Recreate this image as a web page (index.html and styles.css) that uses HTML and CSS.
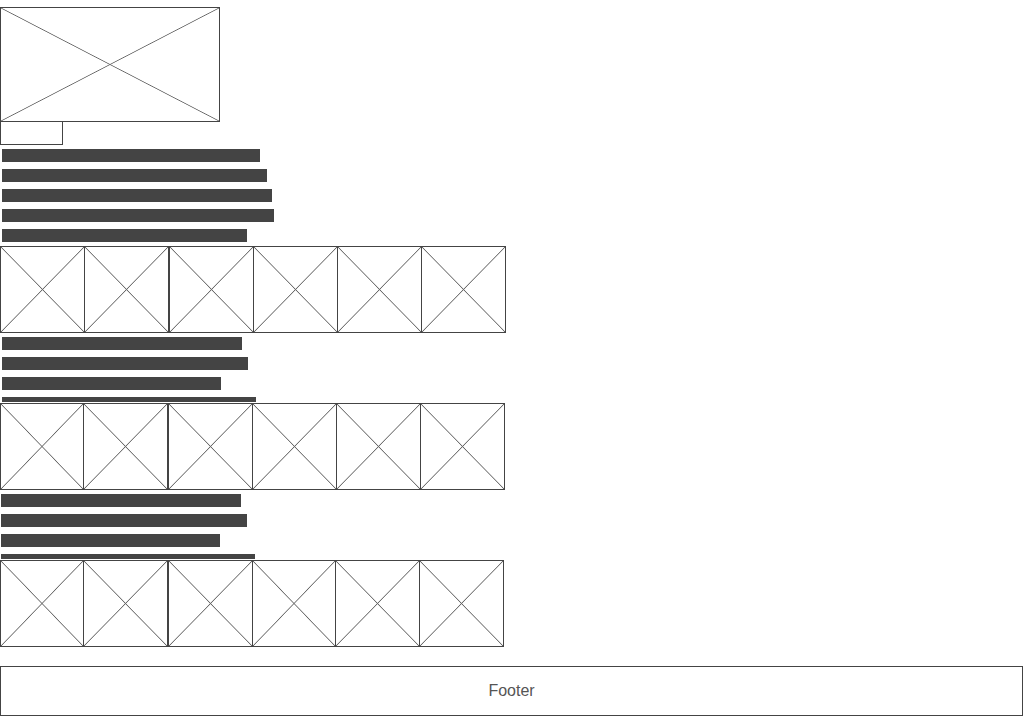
FILE: index.html
```html
<!DOCTYPE html>
<html lang="en">
<head>
    <meta charset="UTF-8">
    <meta name="viewport" content="width=device-width, initial-scale=1.0">
    <title>Wireframe</title>
    <link rel="stylesheet" href="styles.css">
</head>
<body>
    <div class="page">
        <!-- Hero image and caption -->
        <div class="placeholder hero"></div>
        <div class="caption-box"></div>

        <div class="lines intro">
            <div class="line" style="width: 258px"></div>
            <div class="line" style="width: 265px"></div>
            <div class="line" style="width: 270px"></div>
            <div class="line" style="width: 272px"></div>
            <div class="line" style="width: 245px"></div>
        </div>

        <!-- Gallery 1 -->
        <div class="gallery">
            <div class="placeholder cell"></div>
            <div class="placeholder cell"></div>
            <div class="placeholder cell split"></div>
            <div class="placeholder cell"></div>
            <div class="placeholder cell"></div>
            <div class="placeholder cell"></div>
        </div>

        <div class="lines clipped">
            <div class="line" style="width: 240px"></div>
            <div class="line" style="width: 246px"></div>
            <div class="line" style="width: 219px"></div>
            <div class="line" style="width: 254px"></div>
        </div>

        <!-- Gallery 2 -->
        <div class="gallery narrow">
            <div class="placeholder cell"></div>
            <div class="placeholder cell"></div>
            <div class="placeholder cell split"></div>
            <div class="placeholder cell"></div>
            <div class="placeholder cell"></div>
            <div class="placeholder cell"></div>
        </div>

        <div class="lines clipped shifted">
            <div class="line" style="width: 240px"></div>
            <div class="line" style="width: 246px"></div>
            <div class="line" style="width: 219px"></div>
            <div class="line" style="width: 254px"></div>
        </div>

        <!-- Gallery 3 -->
        <div class="gallery narrower">
            <div class="placeholder cell"></div>
            <div class="placeholder cell"></div>
            <div class="placeholder cell split"></div>
            <div class="placeholder cell"></div>
            <div class="placeholder cell"></div>
            <div class="placeholder cell"></div>
        </div>

        <footer class="footer">Footer</footer>
    </div>
</body>
</html>
```

FILE: styles.css
```css
/* Reset */
* {
    margin: 0;
    padding: 0;
    box-sizing: border-box;
}

body {
    font-family: 'Liberation Sans', Arial, sans-serif;
    color: #444;
    background: #fff;
}

.page {
    width: 1024px;
    padding-top: 7px;
}

/* Image placeholder: box with an X */
.placeholder {
    border: 1px solid #444;
    background:
        linear-gradient(to top right, transparent calc(50% - 0.8px), #666 50%, transparent calc(50% + 0.8px)),
        linear-gradient(to bottom right, transparent calc(50% - 0.8px), #666 50%, transparent calc(50% + 0.8px));
}

.hero {
    width: 220px;
    height: 115px;
}

.caption-box {
    width: 63px;
    height: 24px;
    margin-top: -1px;
    border: 1px solid #444;
}

/* Text lines */
.lines {
    display: flex;
    flex-direction: column;
    gap: 7px;
    padding-left: 2px;
}

.line {
    height: 13px;
    background-color: #444;
    flex-shrink: 0;
}

.intro {
    margin-top: 4px;
}

.clipped {
    height: 65px;
    overflow: hidden;
    margin-top: 4px;
}

.shifted {
    padding-left: 1px;
}

/* Galleries */
.gallery {
    display: flex;
    margin-top: 4px;
}

.clipped + .gallery {
    margin-top: 1px;
}

.cell {
    width: 85px;
    height: 87px;
    margin-left: -1px;
}

.cell:first-child {
    margin-left: 0;
}

.cell.split {
    margin-left: 0;
}

.narrow .cell:first-child {
    width: 84px;
}

.narrower .cell {
    width: 84.8px;
}

.narrower .cell:first-child {
    width: 84px;
}

/* Footer */
.footer {
    width: 1023px;
    height: 50px;
    margin-top: 19px;
    border: 1px solid #444;
    display: flex;
    align-items: center;
    justify-content: center;
    font-size: 16px;
    color: #555;
}
```
